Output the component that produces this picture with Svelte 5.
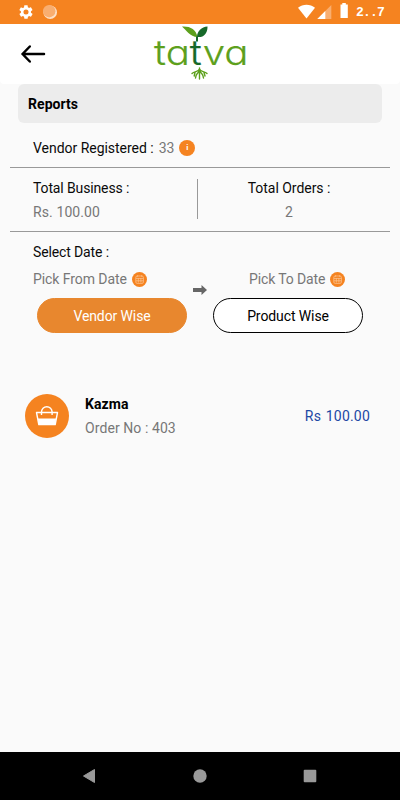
<script lang="ts">
  const orders = [{ name: 'Kazma', no: 403, amount: '100.00' }];
  let tab = $state('vendor');
</script>

{#snippet calendar()}
  <svg class="cal" width="15" height="15" viewBox="0 0 15 15">
    <circle cx="7.5" cy="7.5" r="7.5" fill="#f58320" />
    <g fill="none" stroke="#fbc08c" stroke-width="0.8">
      <rect x="3.8" y="4" width="7.6" height="7.4" rx="1.4" />
      <path d="M5.6 3.2v1.6M9.6 3.2v1.6M4 6.4h7.4M4 8.8h7.4M6.3 6v4.6M8.9 6v4.6" />
    </g>
  </svg>
{/snippet}

<div class="screen">
  <div class="status">
    <svg class="gear" width="16" height="16" viewBox="0 0 24 24">
      <path fill="#fff" d="M19.4 13c0-.3.1-.6.1-1s0-.7-.1-1l2.1-1.7c.2-.1.2-.4.1-.6l-2-3.5c-.1-.2-.4-.3-.6-.2l-2.5 1c-.5-.4-1.1-.7-1.7-1l-.4-2.6c0-.2-.2-.4-.5-.4h-4c-.2 0-.5.2-.5.4L9 5.1c-.6.2-1.2.6-1.7 1l-2.5-1c-.2-.1-.5 0-.6.2l-2 3.5c-.1.2-.1.4.1.6L4.5 11c0 .3-.1.7-.1 1s0 .7.1 1l-2.1 1.7c-.2.1-.2.4-.1.6l2 3.5c.1.2.4.3.6.2l2.5-1c.5.4 1.1.7 1.7 1l.4 2.6c0 .2.2.4.5.4h4c.2 0 .5-.2.5-.4l.4-2.6c.6-.2 1.2-.6 1.7-1l2.5 1c.2.1.5 0 .6-.2l2-3.5c.1-.2.1-.5-.1-.6zM12 15.8a3.8 3.8 0 1 1 0-7.6 3.8 3.8 0 0 1 0 7.6z" />
    </svg>
    <svg width="16" height="16" viewBox="0 0 16 16">
      <circle cx="8.2" cy="8.2" r="6.8" fill="#fde0c6" />
      <circle cx="7.2" cy="7.2" r="6.2" fill="#f9ae70" />
    </svg>
    <span class="grow"></span>
    <svg width="50" height="18" viewBox="0 0 50 18">
      <path fill="#fff" d="M0 4.8C4.8.7 12.2.7 17 4.8L8.5 15.4z" />
      <path fill="#f9ae70" d="M33.3 2v14H19.3z" />
      <path fill="#fff" d="M27.3 8v8h-8z" />
      <path fill="#fff" d="M42.5 1.5h1.8V0h3.5v1.5h2V15h-7.3z" />
    </svg>
    <span class="clock">2..7</span>
  </div>

  <header>
    <svg class="back" width="26" height="20" viewBox="0 0 26 20">
      <path d="M24 10H2.5M9.8 2.5L2.5 10l7.3 7.5" fill="none" stroke="#000" stroke-width="2.5" stroke-linecap="round" stroke-linejoin="round" />
    </svg>
    <svg class="logo" width="96" height="58" viewBox="0 0 96 58">
      <text class="brand" x="1" y="40" textLength="94.5" lengthAdjust="spacingAndGlyphs">ta<tspan fill="#17692a" stroke="#17692a">t</tspan>va</text>
      <path fill="#5da01c" d="M29 1.5c8-.5 14 2.5 15.5 10.5C37 12 33 5 29 1.500z" />
      <path fill="#17692a" d="M54.5 1.500c-6 .5-10.500 4.500-10.500 10.500 6.500.8 10.500-3 10.500-10.500z" />
      <path d="M44 11.5v5" stroke="#17692a" stroke-width="2" />
      <g fill="none" stroke="#5da01c" stroke-width="1.4" stroke-linecap="round">
        <path d="M46.500 43v11M46.500 44c-1 3-5 2-7.500 4.500M46.500 44c1 3 5 2 7.500 4.500M46 46.500c-2 3-3 2-3.500 6.500M47 46.500c2 3 3 2 3.500 6.500M42 47.500l-.8 3.500M51 47.500l1 3.500" />
      </g>
    </svg>
  </header>

  <main>
    <h1>Reports</h1>

    <section class="registered">
      <span class="label">Vendor Registered :</span>
      <span class="value">33</span>
      <span class="info">i</span>
    </section>

    <section class="totals">
      <div class="total">
        <span class="label">Total Business :</span>
        <span class="value rs">Rs. 100.00</span>
      </div>
      <div class="total right">
        <span class="label">Total Orders :</span>
        <span class="value">2</span>
      </div>
    </section>

    <section class="dates">
      <span class="label">Select Date :</span>
      <div class="range">
        <div class="side">
          <div class="pick"><span>Pick From Date</span>{@render calendar()}</div>
          <button class:active={tab === 'vendor'} onclick={() => (tab = 'vendor')}>Vendor Wise</button>
        </div>
        <svg class="to" width="14" height="10" viewBox="0 0 14 10">
          <path fill="#666" d="M0 3h8.5V0L14 5l-5.5 5V7H0z" />
        </svg>
        <div class="side to-side">
          <div class="pick"><span>Pick To Date</span>{@render calendar()}</div>
          <button class:active={tab === 'product'} onclick={() => (tab = 'product')}>Product Wise</button>
        </div>
      </div>
    </section>

    <ul>
      {#each orders as order}
        <li>
          <svg width="44" height="44" viewBox="0 0 44 44">
            <circle cx="22" cy="22" r="22" fill="#f58320" />
            <g fill="none" stroke="#fff" stroke-width="1.4" stroke-linejoin="round">
              <path d="M11.5 18.5h21l-2.3 12H13.8z" />
              <path d="M16.5 21v-3a5.3 5.3 0 0 1 10.6 0v3" />
            </g>
            <path fill="#fff" d="M12.8 24.5h18.4l-1.3 6.500H14z" />
          </svg>
          <div class="who">
            <b>{order.name}</b>
            <span>Order No : {order.no}</span>
          </div>
          <span class="amount">Rs {order.amount}</span>
        </li>
      {/each}
    </ul>
  </main>

  <nav>
    <svg width="14" height="14" viewBox="0 0 14 14"><path fill="#999" d="M11.5.5v13L.5 7z" stroke="#999" stroke-linejoin="round" /></svg>
    <svg width="14" height="14" viewBox="0 0 14 14"><circle cx="7" cy="7" r="6.7" fill="#999" /></svg>
    <svg width="14" height="14" viewBox="0 0 14 14"><rect x="0.7" y="0.7" width="12.6" height="12.6" rx="1" fill="#999" /></svg>
  </nav>
</div>

<style>
  :global(body) {
    margin: 0;
    background: #fafafa;
  }

  .screen {
    display: flex;
    flex-direction: column;
    width: 400px;
    height: 800px;
    overflow: hidden;
    background: #fafafa;
    color: #0a0a0a;
    font-family: Roboto, 'Liberation Sans', sans-serif;
    font-size: 14px;
    line-height: 24px;
  }

  svg {
    display: block;
    flex: none;
  }

  .status {
    display: flex;
    align-items: center;
    height: 24px;
    padding: 0 16px 0 18px;
    background: #f58320;
    box-sizing: border-box;
  }

  .gear {
    margin-right: 8px;
  }

  .grow {
    flex: 1;
  }

  .clock {
    width: 28px;
    padding-top: 2px;
    margin-left: 8px;
    color: #fff;
    font: 700 13px/24px 'Liberation Mono', monospace;
    letter-spacing: -0.8px;
  }

  header {
    display: flex;
    align-items: flex-start;
    height: 60px;
    background: #fff;
    border-radius: 0 0 4px 4px;
  }

  .back {
    margin: 20px 0 0 20px;
  }

  .logo {
    margin: 1px 0 0 107px;
    overflow: visible;
  }

  .brand {
    font-family: Inter, sans-serif;
    font-size: 35px;
    font-weight: 300;
    font-feature-settings: 'cv11';
    fill: #5da01c;
    stroke: #5da01c;
    stroke-width: 0.2px;
  }

  main {
    flex: 1;
  }

  h1 {
    margin: 0 18px;
    padding-left: 10px;
    height: 39px;
    border-radius: 6px;
    background: #ececec;
    font-size: 14px;
    font-weight: 700;
    letter-spacing: 0.05px;
    line-height: 40px;
    color: #000;
  }

  section {
    margin: 0 10px;
    padding-left: 23px;
  }

  .label {
    letter-spacing: -0.13px;
  }

  .right .label,
  .registered .label {
    letter-spacing: -0.03px;
  }

  .value,
  .pick {
    color: #777;
  }

  .rs {
    letter-spacing: 0.1px;
  }

  .registered {
    display: flex;
    align-items: center;
    height: 38px;
    padding-top: 6px;
    border-bottom: 1px solid #999;
  }

  .registered .value {
    margin: 0 5px;
  }

  .info {
    width: 16px;
    height: 16px;
    border-radius: 50%;
    background: #f58320;
    color: #fff;
    font-size: 8px;
    font-weight: 700;
    line-height: 16px;
    text-align: center;
  }

  .totals {
    display: flex;
    height: 63px;
    border-bottom: 1px solid #999;
    align-items: flex-start;
  }

  .total {
    display: flex;
    flex-direction: column;
    width: 164px;
    height: 40px;
    margin-top: 11px;
    border-right: 1px solid #999;
  }

  .total span {
    margin-top: -3px;
    margin-bottom: 3px;
  }

  .total.right {
    width: 182px;
    border: 0;
    align-items: center;
  }

  .dates {
    padding-top: 8px;
  }

  .range {
    display: flex;
    margin-top: 3px;
  }

  .pick {
    display: flex;
    align-items: center;
    gap: 5px;
    height: 24px;
    letter-spacing: -0.07px;
  }

  .side {
    width: 154px;
  }

  .to {
    margin: 18px 6px 0;
  }

  .to-side .pick {
    margin-left: 36px;
    letter-spacing: -0.12px;
  }

  button {
    display: block;
    width: 150px;
    height: 35px;
    margin: 7px 0 0 4px;
    padding: 0;
    border: 1px solid #000;
    border-radius: 18px;
    background: #fff;
    color: #000;
    font: inherit;
    letter-spacing: -0.1px;
  }

  .to-side button {
    margin-left: 0;
  }

  button.active {
    border-color: #e8872e;
    background: #e8872e;
    color: #fff;
  }

  ul {
    margin: 59px 0 0;
    padding: 0 30px 0 25px;
    list-style: none;
  }

  li {
    display: flex;
    align-items: center;
  }

  .who {
    display: flex;
    flex-direction: column;
    margin-left: 16px;
    color: #777;
    letter-spacing: 0.08px;
  }

  .who b {
    color: #000;
  }

  .amount {
    margin-left: auto;
    color: #1c48a4;
    letter-spacing: 0.2px;
    word-spacing: 1px;
  }

  nav {
    display: flex;
    justify-content: center;
    align-items: center;
    gap: 96px;
    height: 48px;
    background: #000;
  }
</style>
